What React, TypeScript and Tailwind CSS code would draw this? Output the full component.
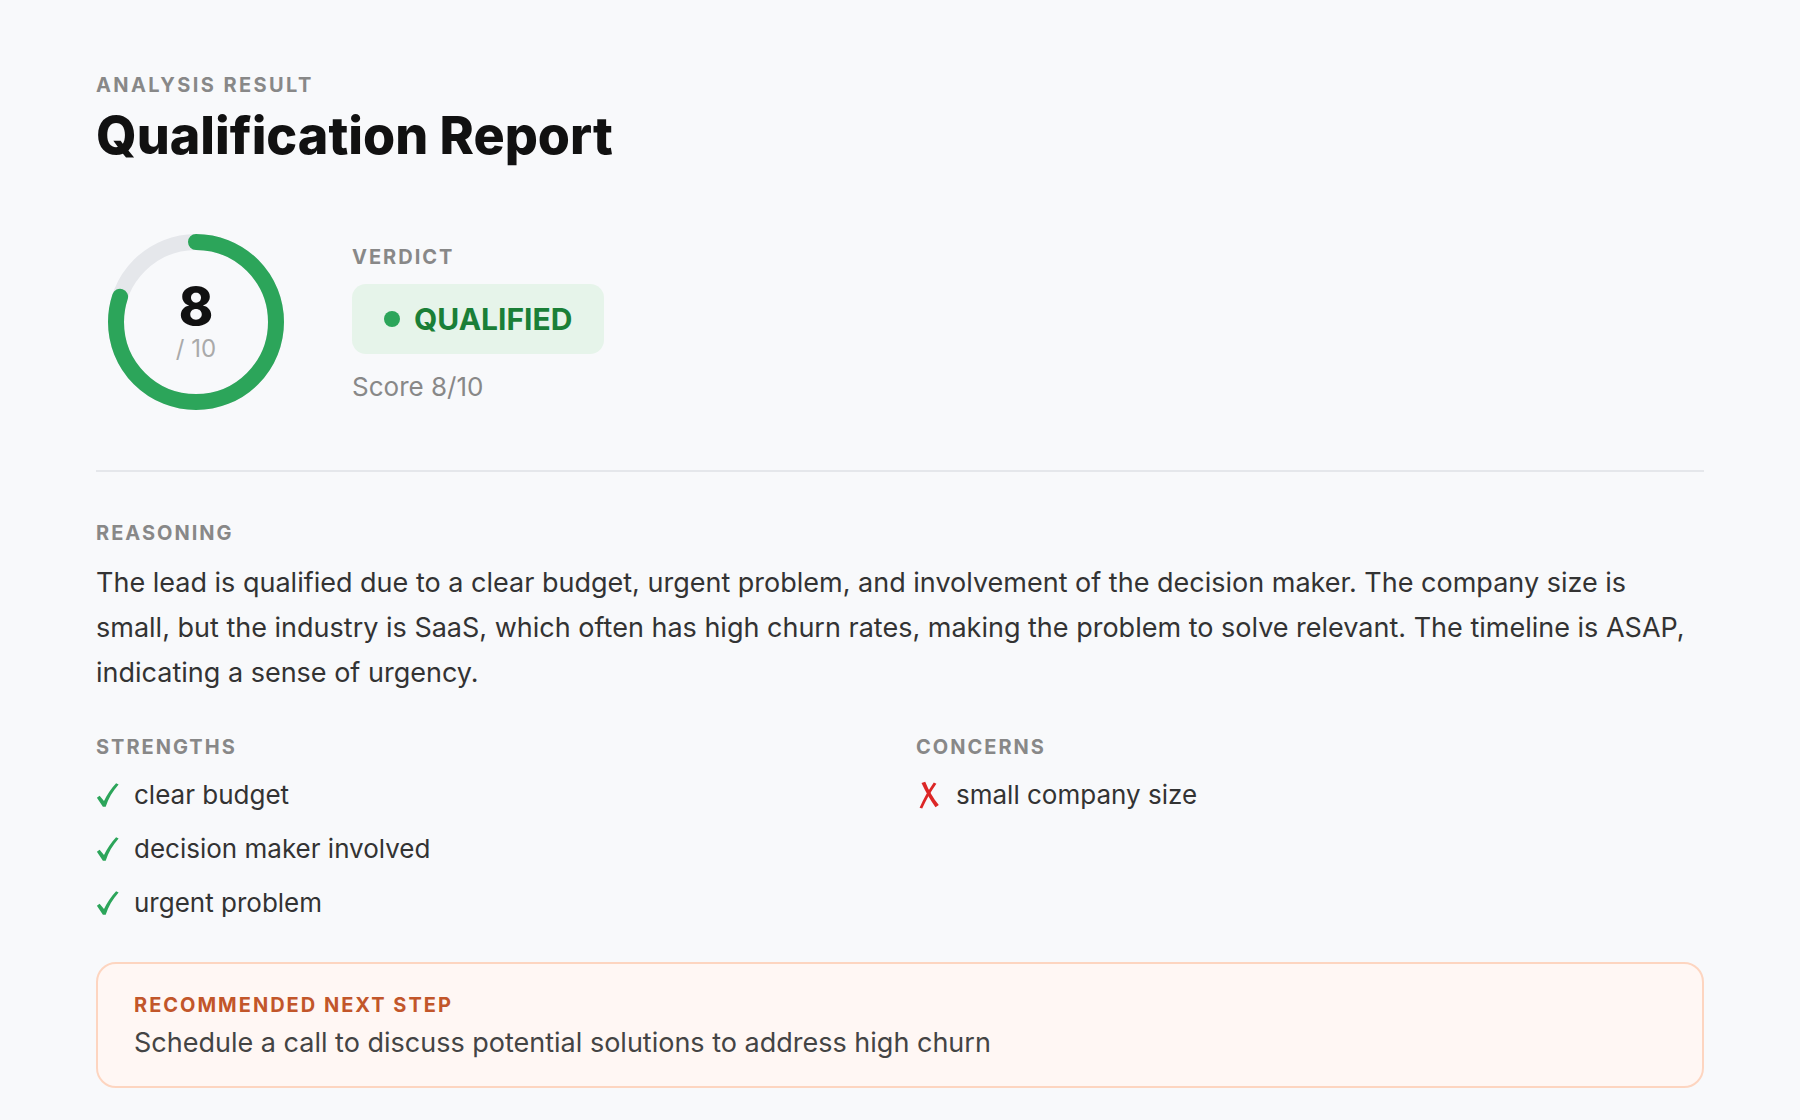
const font = { fontFamily: "Inter, sans-serif" };

const labelClass = "text-[20px] leading-[24px] font-bold tracking-[0.1em] text-[#888888] uppercase";

function Gauge() {
  return (
    <div className="relative w-[176px] h-[176px] shrink-0">
      <svg width="176" height="176" viewBox="0 0 176 176" className="-rotate-90">
        <circle cx="88" cy="88" r="80" fill="none" stroke="#e5e7eb" strokeWidth="16" />
        <circle
          cx="88"
          cy="88"
          r="80"
          fill="none"
          stroke="#2ca55a"
          strokeWidth="16"
          strokeLinecap="round"
          strokeDasharray="402.1 502.7"
        />
      </svg>
      <div className="absolute inset-0 flex flex-col items-center justify-center">
        <span className="text-[52px] leading-[52px] font-extrabold text-[#111111]">8</span>
        <span className="mt-[2px] text-[24px] leading-[28px] text-[#aaaaaa]">/ 10</span>
      </div>
    </div>
  );
}

function Check() {
  return (
    <svg width="24" height="26" viewBox="0 0 24 26" className="shrink-0">
      <path
        d="M0.9 15.7 L3.6 13.8 L8 19 C10.9 12.8 14.9 6.8 20.1 1.2 L22.6 2.6 C16.6 9.5 12.3 16.5 9.7 24.7 L6.9 24.7 Z"
        fill="#2ca55a"
      />
    </svg>
  );
}

function Cross() {
  return (
    <svg width="26" height="28" viewBox="0 0 26 28" className="shrink-0">
      <path
        d="M5.5 1.9 L9.2 0.7 C12.6 9 17.2 17 22.8 24.1 L19.5 26.2 C14.2 18.7 9.3 10.5 5.5 1.9 Z"
        fill="#dc2626"
      />
      <path
        d="M17.8 1.5 L20.4 2.7 C15.2 10 10.2 18.5 6.2 27.5 L3.6 26.8 C7.6 17.8 12.4 9.1 17.8 1.5 Z"
        fill="#dc2626"
      />
    </svg>
  );
}

export default function App() {
  return (
    <div className="min-h-[1120px] bg-[#f8f9fb] px-24 pt-[73px] text-[#333333]" style={font}>
      <div className={`${labelClass} tracking-[0.12em]`}>Analysis Result</div>
      <h1 className="mt-[4px] text-[52px] leading-[70px] font-extrabold text-[#111111]">
        Qualification Report
      </h1>

      <div className="mt-[63px] flex items-center gap-[68px] pl-3">
        <Gauge />
        <div className="pt-[6px]">
          <div className={labelClass}>Verdict</div>
          <div className="mt-[15px] inline-flex items-center gap-[14px] rounded-[14px] bg-[#e6f4ea] px-8 h-[70px] text-[30px] font-bold text-[#1a7f37]">
            <span className="w-4 h-4 rounded-full bg-[#2ca55a]" />
            QUALIFIED
          </div>
          <div className="mt-[15px] text-[26px] leading-[36px] text-[#888888]">Score 8/10</div>
        </div>
      </div>

      <div className="mt-[60px] border-t-2 border-[#e5e7eb]" />

      <div className={`mt-[49px] ${labelClass}`}>Reasoning</div>
      <p className="mt-[16px] text-[27px] leading-[44.8px] text-[#333333]">
        The lead is qualified due to a clear budget, urgent problem, and involvement of the decision maker. The company size is small, but the industry is SaaS, which often has high churn rates, making the problem to solve relevant. The timeline is ASAP, indicating a sense of urgency.
      </p>

      <div className="mt-[39.6px] grid grid-cols-2 gap-8">
        <div>
          <div className={labelClass}>Strengths</div>
          <ul className="mt-[18px] flex flex-col gap-[18px]">
            {["clear budget", "decision maker involved", "urgent problem"].map((item) => (
              <li key={item} className="flex items-center gap-[14px] text-[26px] leading-[36px]">
                <Check />
                {item}
              </li>
            ))}
          </ul>
        </div>
        <div>
          <div className={labelClass}>Concerns</div>
          <ul className="mt-[18px] flex flex-col gap-[18px]">
            <li className="flex items-center gap-[14px] text-[26px] leading-[36px]">
              <Cross />
              small company size
            </li>
          </ul>
        </div>
      </div>

      <div className="mt-[41px] rounded-[20px] border-2 border-[#fdd5c0] bg-[#fff7f4] px-9 pt-[29px] pb-[23px]">
        <div className="text-[20px] leading-[24px] font-bold tracking-[0.1em] text-[#c2562a] uppercase">
          Recommended Next Step
        </div>
        <div className="mt-[6px] text-[27px] leading-[40px] text-[#444444]">
          Schedule a call to discuss potential solutions to address high churn
        </div>
      </div>
    </div>
  );
}
